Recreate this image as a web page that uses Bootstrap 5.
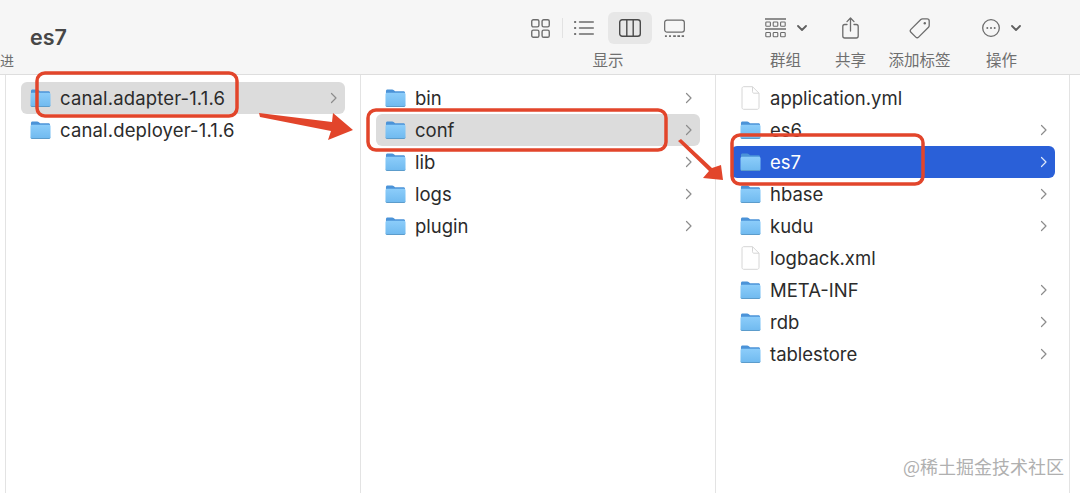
<!DOCTYPE html>
<html lang="zh-CN"><head><meta charset="utf-8">
<link href="https://cdn.jsdelivr.net/npm/bootstrap@5.3.0/dist/css/bootstrap.min.css" rel="stylesheet">
<style>
html,body{margin:0;height:493px;overflow:hidden;background:#fff}
body{font-family:Inter,"Liberation Sans","Noto Sans CJK SC",sans-serif}
.finder{position:relative;width:1080px;height:493px;overflow:hidden}
.tbar{height:75px;background:#f6f6f6;border-bottom:1px solid #dedede;flex:none}
.tb-back{font-size:14px;color:#6e6e6e;line-height:20px;width:14px;margin-top:50px;font-family:"Noto Sans CJK SC",sans-serif;flex:none}
.tb-title{font-size:21.500px;font-weight:600;color:#474747;line-height:26px;margin:24px 0 0 16px;width:501px;flex:none}
.tb-group{flex:none;display:flex;flex-direction:column;align-items:center;padding-top:12px}
.tb-icons{height:32px;display:flex;align-items:center}
.tb-label{font-size:15.500px;line-height:20px;color:#6f6f6f;margin-top:5px;font-family:"Noto Sans CJK SC",sans-serif;white-space:nowrap}
.view-grp{width:154px}
.v-btn{width:44px;height:32px;display:flex;align-items:center;justify-content:center;border-radius:6px;margin:0 12px 0 14px}
.v-on{background:#e7e7e7}
.v-sep{width:1px;height:20px;background:#e2e2e2;margin:0 11px 0 12px}
.g-group{width:41px;margin-left:80px}
.g-share{width:31px;margin-left:29px}
.g-tag{width:63px;margin-left:22px}
.g-act{width:39px;margin-left:31px}
.down-gap{margin-left:11px}
.cols{flex:1;min-height:0}
.col-edge{width:6px;border-right:1px solid #e3e3e3;flex:none}
.fcol{flex:none;border-right:1px solid #e3e3e3;padding:7px 15px 0 15px}
.w1{width:355px}.w2{width:355px}.w3{width:354px;padding-right:14px}
.frow{height:32px;display:flex;align-items:center;padding:0 7px 0 9px;border-radius:6px;font-size:18.500px;color:#2b2b2b;line-height:31px}
.frow svg.ic{flex:none;margin-right:9px}
.fname{flex:1;white-space:nowrap}
.fname-wide{letter-spacing:.15px}
.frow.gray{background:#dcdcdc}
.frow.blue{background:#2a60d8;color:#fff}
.overlay{position:absolute;left:0;top:0;pointer-events:none}
.wmark{position:absolute;right:16px;top:454px;font-size:18px;line-height:24px;color:#b0b0b0;font-family:"Noto Sans CJK SC",sans-serif;white-space:nowrap}
</style></head>
<body>
<svg width="0" height="0" class="d-block" style="position:absolute">
<defs>
<linearGradient id="fb" x1="0" y1="0" x2="0" y2="1"><stop offset="0" stop-color="#8ccdfa"/><stop offset="1" stop-color="#6fb9ef"/></linearGradient>
<symbol id="folder" viewBox="0 0 22 20"><path d="M1 4V2.600C1 1.700 1.700 1 2.600 1h5c.6 0 1 .2 1.400.6L10.600 3H19.400c.9 0 1.600.7 1.600 1.600V6H1z" fill="#4b93d8"/><path d="M.5 6.600C.5 5.300 1.300 4.600 2.500 4.600h17c1.200 0 2 .7 2 2V17.400c0 1.200-.8 2-2 2h-17c-1.200 0-2-.8-2-2z" fill="url(#fb)"/><path d="M.5 17.400c0 1.200.8 2 2 2h17c1.200 0 2-.8 2-2v-.7c0 1.100-.8 1.700-2 1.700h-17c-1.200 0-2-.6-2-1.700z" fill="#5c9ccb"/></symbol>
<symbol id="doc" viewBox="0 0 20 24"><path d="M1.500 2.500C1.500 1.400 2.400.7 3.300.7h8.700l6.500 6.500v14.300c0 1-.8 1.800-1.800 1.800H3.300c-1 0-1.800-.8-1.800-1.800z" fill="#fff" stroke="#d6d6d6"/><path d="M12 .7v5c0 .9.600 1.500 1.500 1.500h5" fill="none" stroke="#d6d6d6"/></symbol>
<symbol id="chev" viewBox="0 0 8 12"><path d="M1.500 1.500l4.500 4.500-4.500 4.500" fill="none" stroke="currentColor" stroke-width="1.200" stroke-linecap="round" stroke-linejoin="round"/></symbol>
<symbol id="down" viewBox="0 0 10 6"><path d="M1 1l4 4 4-4" fill="none" stroke="#5f5f5f" stroke-width="1.800" stroke-linecap="round" stroke-linejoin="round"/></symbol>
</defs></svg>
<div class="finder d-flex flex-column">
 <div class="tbar d-flex">
  <div class="tb-back">进</div>
  <div class="tb-title">es7</div>
  <div class="tb-group view-grp">
   <div class="tb-icons">
    <svg width="19" height="19" viewBox="0 0 18 18" fill="none" stroke="#6c6c6c" stroke-width="1.300"><rect x=".7" y=".7" width="6.800" height="6.800" rx="1.500"/><rect x="10.500" y=".7" width="6.800" height="6.800" rx="1.500"/><rect x=".7" y="10.500" width="6.800" height="6.800" rx="1.500"/><rect x="10.500" y="10.500" width="6.800" height="6.800" rx="1.500"/></svg>
    <span class="v-sep"></span>
    <svg width="20" height="16" viewBox="0 0 20 16" fill="none" stroke="#6c6c6c" stroke-width="1.400" stroke-linecap="round"><path d="M5.500 2H19.300M5.500 8H19.300M5.500 14H19.300"/><path d="M.8 2h.6M.8 8h.6M.8 14h.6" stroke-width="1.800"/></svg>
    <div class="v-btn v-on"><svg width="22" height="18" viewBox="0 0 22 18" fill="none" stroke="#4a4a4a" stroke-width="1.400"><rect x=".7" y=".7" width="20.600" height="16.600" rx="2.500"/><path d="M7.800 1v16M14.200 1v16"/></svg></div>
    <svg width="21" height="19" viewBox="0 0 22 19" fill="none" stroke="#6c6c6c" stroke-width="1.300"><rect x=".7" y=".7" width="20.600" height="12.600" rx="2.500"/><path d="M1 17.500h2M5.300 17.500h2M9.600 17.500h2.800M14 17.500h2.800M18.500 17.500h2.500" stroke-width="2"/></svg>
   </div>
   <div class="tb-label">显示</div>
  </div>
  <div class="tb-group g-group">
   <div class="tb-icons">
    <svg width="21" height="20" viewBox="0 0 21 20" fill="none" stroke="#6c6c6c" stroke-width="1.100"><path d="M0 1h21M0 11h21" stroke-width="1.300"/><rect x=".8" y="4" width="4.600" height="4.200" rx=".8"/><rect x="8.200" y="4" width="4.600" height="4.200" rx=".8"/><rect x="15.600" y="4" width="4.600" height="4.200" rx=".8"/><rect x=".8" y="14.500" width="4.600" height="4.200" rx=".8"/><rect x="8.200" y="14.500" width="4.600" height="4.200" rx=".8"/><rect x="15.600" y="14.500" width="4.600" height="4.200" rx=".8"/></svg>
    <svg class="down-gap" width="10" height="6"><use href="#down"/></svg>
   </div>
   <div class="tb-label">群组</div>
  </div>
  <div class="tb-group g-share">
   <div class="tb-icons">
    <svg width="17" height="22" viewBox="0 0 17 22" fill="none" stroke="#6c6c6c" stroke-width="1.300" stroke-linecap="round" stroke-linejoin="round"><path d="M5 7.500H2.800C1.600 7.500.8 8.300.8 9.500v9.500c0 1.200.8 2 2 2h11.400c1.200 0 2-.8 2-2V9.500c0-1.200-.8-2-2-2H12"/><path d="M8.500 14V1.200M5 4.600l3.500-3.600L12 4.600"/></svg>
   </div>
   <div class="tb-label">共享</div>
  </div>
  <div class="tb-group g-tag">
   <div class="tb-icons">
    <svg width="21" height="21" viewBox="0 0 21 21" fill="none" stroke="#6c6c6c" stroke-width="1.300" stroke-linejoin="round"><path d="M11.800 1.500c.5-.5 1-.7 1.700-.7h4.600c1.200 0 2.100.9 2.100 2.100v4.600c0 .7-.2 1.200-.7 1.700L9.600 19.100c-.8.800-2 .8-2.800 0L1.900 14.200c-.8-.8-.8-2 0-2.800z"/><circle cx="15.800" cy="5.200" r="1.200" fill="#6c6c6c" stroke="none"/></svg>
   </div>
   <div class="tb-label">添加标签</div>
  </div>
  <div class="tb-group g-act">
   <div class="tb-icons">
    <svg width="18" height="18" viewBox="0 0 18 18" fill="none" stroke="#6c6c6c" stroke-width="1.300"><circle cx="9" cy="9" r="8.300"/><circle cx="5.300" cy="9" r="1" fill="#6c6c6c" stroke="none"/><circle cx="9" cy="9" r="1" fill="#6c6c6c" stroke="none"/><circle cx="12.700" cy="9" r="1" fill="#6c6c6c" stroke="none"/></svg>
    <svg class="down-gap" width="10" height="6"><use href="#down"/></svg>
   </div>
   <div class="tb-label">操作</div>
  </div>
 </div>
 <div class="cols d-flex">
  <div class="col-edge"></div>
  <div class="fcol w1">
   <div class="frow gray"><svg class="ic" width="21" height="20"><use href="#folder"/></svg><span class="fname fname-wide">canal.adapter-1.1.6</span><svg width="8" height="12" style="color:#8c8c8c"><use href="#chev"/></svg></div>
   <div class="frow"><svg class="ic" width="21" height="20"><use href="#folder"/></svg><span class="fname fname-wide">canal.deployer-1.1.6</span></div>
  </div>
  <div class="fcol w2">
   <div class="frow"><svg class="ic" width="21" height="20"><use href="#folder"/></svg><span class="fname">bin</span><svg width="8" height="12" style="color:#8c8c8c"><use href="#chev"/></svg></div>
   <div class="frow gray"><svg class="ic" width="21" height="20"><use href="#folder"/></svg><span class="fname">conf</span><svg width="8" height="12" style="color:#8c8c8c"><use href="#chev"/></svg></div>
   <div class="frow"><svg class="ic" width="21" height="20"><use href="#folder"/></svg><span class="fname">lib</span><svg width="8" height="12" style="color:#8c8c8c"><use href="#chev"/></svg></div>
   <div class="frow"><svg class="ic" width="21" height="20"><use href="#folder"/></svg><span class="fname">logs</span><svg width="8" height="12" style="color:#8c8c8c"><use href="#chev"/></svg></div>
   <div class="frow"><svg class="ic" width="21" height="20"><use href="#folder"/></svg><span class="fname">plugin</span><svg width="8" height="12" style="color:#8c8c8c"><use href="#chev"/></svg></div>
  </div>
  <div class="fcol w3">
   <div class="frow"><svg class="ic" width="21" height="24"><use href="#doc"/></svg><span class="fname">application.yml</span></div>
   <div class="frow"><svg class="ic" width="21" height="20"><use href="#folder"/></svg><span class="fname">es6</span><svg width="8" height="12" style="color:#8c8c8c"><use href="#chev"/></svg></div>
   <div class="frow blue"><svg class="ic" width="21" height="20"><use href="#folder"/></svg><span class="fname">es7</span><svg width="8" height="12" style="color:#dfe8fb"><use href="#chev"/></svg></div>
   <div class="frow"><svg class="ic" width="21" height="20"><use href="#folder"/></svg><span class="fname">hbase</span><svg width="8" height="12" style="color:#8c8c8c"><use href="#chev"/></svg></div>
   <div class="frow"><svg class="ic" width="21" height="20"><use href="#folder"/></svg><span class="fname">kudu</span><svg width="8" height="12" style="color:#8c8c8c"><use href="#chev"/></svg></div>
   <div class="frow"><svg class="ic" width="21" height="24"><use href="#doc"/></svg><span class="fname">logback.xml</span></div>
   <div class="frow"><svg class="ic" width="21" height="20"><use href="#folder"/></svg><span class="fname">META-INF</span><svg width="8" height="12" style="color:#8c8c8c"><use href="#chev"/></svg></div>
   <div class="frow"><svg class="ic" width="21" height="20"><use href="#folder"/></svg><span class="fname">rdb</span><svg width="8" height="12" style="color:#8c8c8c"><use href="#chev"/></svg></div>
   <div class="frow"><svg class="ic" width="21" height="20"><use href="#folder"/></svg><span class="fname">tablestore</span><svg width="8" height="12" style="color:#8c8c8c"><use href="#chev"/></svg></div>
  </div>
 </div>
 <svg class="overlay" width="1080" height="493">
  <g fill="none" stroke="#e2452b" stroke-width="3.500"><rect x="37" y="73" width="200" height="43" rx="8"/><rect x="368" y="110" width="298" height="40" rx="8"/><rect x="732" y="135" width="191" height="49" rx="8"/></g>
  <g fill="#e2452b"><path d="M259 113l73 9 1-9 20 17-25 10 3-9-71-14z"/><path d="M678 141l3-2 31 29 9-3 2 15-20-2 6-7z"/></g>
 </svg>
 <div class="wmark">@稀土掘金技术社区</div>
</div>
</body></html>
